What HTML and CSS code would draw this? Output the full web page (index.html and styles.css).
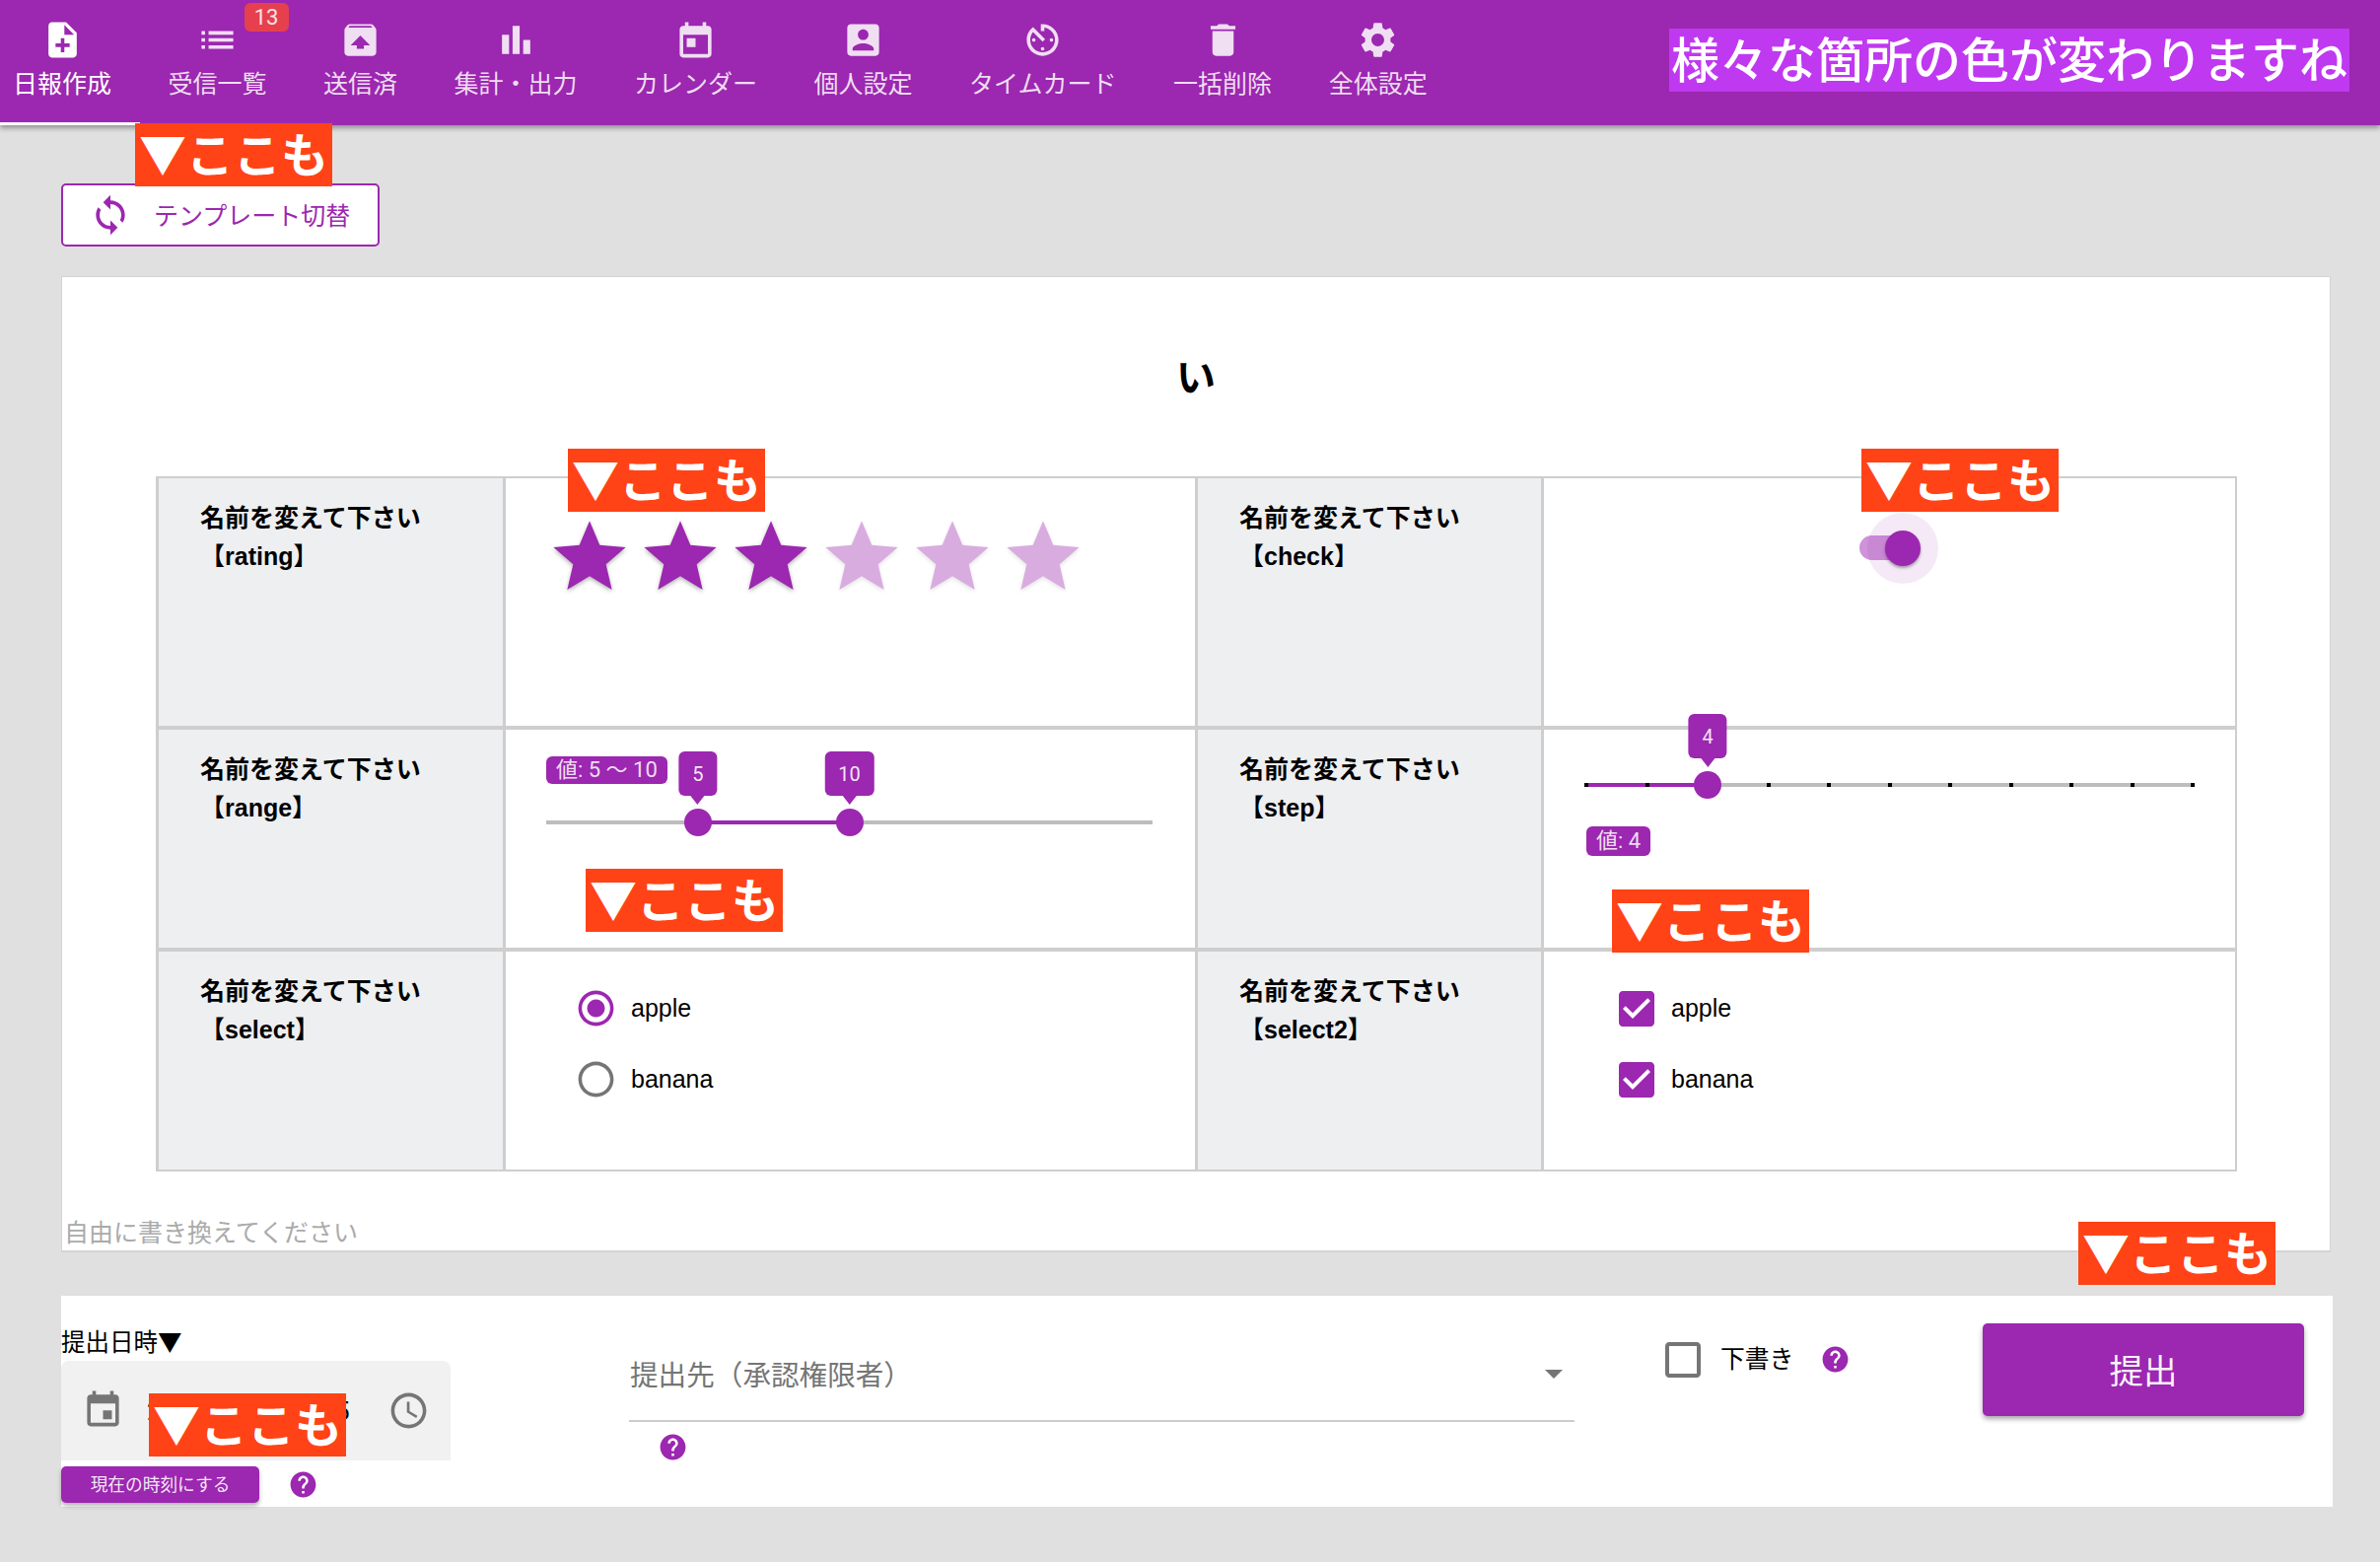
FILE: index.html
```html
<!DOCTYPE html>
<html>
<head>
<meta charset="utf-8">
<title>日報作成</title>
<link rel="stylesheet" href="styles.css">
</head>
<body>

<svg class="icon-defs" width="0" height="0">
  <symbol id="i-note" viewBox="0 0 24 24"><path d="M14 2H6c-1.1 0-1.99.9-1.99 2L4 20c0 1.1.89 2 1.99 2H18c1.1 0 2-.9 2-2V8l-6-6zm2 14h-3v3h-2v-3H8v-2h3v-3h2v3h3v2zm-3-7V3.5L18.5 9H13z"/></symbol>
  <symbol id="i-list" viewBox="0 0 24 24"><path d="M3 13h2v-2H3v2zm0 4h2v-2H3v2zm0-8h2V7H3v2zm4 4h14v-2H7v2zm0 4h14v-2H7v2zM7 7v2h14V7H7z"/></symbol>
  <symbol id="i-unarchive" viewBox="0 0 24 24"><path d="M20.55 5.22l-1.39-1.68C18.88 3.21 18.47 3 18 3H6c-.47 0-.88.21-1.15.55L3.46 5.22C3.17 5.57 3 6.01 3 6.5V19c0 1.1.89 2 2 2h14c1.1 0 2-.9 2-2V6.5c0-.49-.17-.93-.45-1.28zM12 9.5l5.5 5.5H14v2h-4v-2H6.5L12 9.5zM5.12 5l.82-1h12l.93 1H5.12z"/></symbol>
  <symbol id="i-chart" viewBox="0 0 24 24"><path d="M4 9h4v11H4zm6-5h4v16h-4zm6 8h4v8h-4z"/></symbol>
  <symbol id="i-today" viewBox="0 0 24 24"><path d="M19 4h-1V2h-2v2H8V2H6v2H5c-1.11 0-1.99.9-1.99 2L3 20c0 1.1.89 2 2 2h14c1.1 0 2-.9 2-2V6c0-1.1-.9-2-2-2zm0 16H5V9h14v11zM7 11h5v5H7z"/></symbol>
  <symbol id="i-event" viewBox="0 0 24 24"><path d="M17 13h-5v5h5v-5zM16 2v2H8V2H6v2H5c-1.11 0-1.99.9-1.99 2L3 20c0 1.1.89 2 2 2h14c1.1 0 2-.9 2-2V6c0-1.1-.9-2-2-2h-1V2h-2zm3 18H5V9h14v11z"/></symbol>
  <symbol id="i-account" viewBox="0 0 24 24"><path d="M3 5v14c0 1.1.89 2 2 2h14c1.1 0 2-.9 2-2V5c0-1.1-.9-2-2-2H5c-1.11 0-2 .9-2 2zm12 4c0 1.66-1.34 3-3 3s-3-1.34-3-3 1.34-3 3-3 3 1.34 3 3zm-9 8c0-2 4-3.1 6-3.1s6 1.1 6 3.1v1H6v-1z"/></symbol>
  <symbol id="i-timer" viewBox="0 0 24 24"><path d="M11 17c0 .55.45 1 1 1s1-.45 1-1-.45-1-1-1-1 .45-1 1zm0-14v4h2V5.08c3.39.49 6 3.39 6 6.92 0 3.87-3.13 7-7 7s-7-3.13-7-7c0-1.68.59-3.22 1.58-4.42L12 13l1.41-1.41-6.8-6.8v.02C4.42 6.45 3 9.05 3 12c0 4.97 4.02 9 9 9 4.97 0 9-4.03 9-9s-4.03-9-9-9h-1zm7 9c0-.55-.45-1-1-1s-1 .45-1 1 .45 1 1 1 1-.45 1-1zM6 12c0 .55.45 1 1 1s1-.45 1-1-.45-1-1-1-1 .45-1 1z"/></symbol>
  <symbol id="i-delete" viewBox="0 0 24 24"><path d="M6 19c0 1.1.9 2 2 2h8c1.1 0 2-.9 2-2V7H6v12zM19 4h-3.5l-1-1h-5l-1 1H5v2h14V4z"/></symbol>
  <symbol id="i-settings" viewBox="0 0 24 24"><path d="M19.14 12.94c.04-.3.06-.61.06-.94 0-.32-.02-.64-.07-.94l2.03-1.58c.18-.14.23-.41.12-.61l-1.92-3.32c-.12-.22-.37-.29-.59-.22l-2.39.96c-.5-.38-1.03-.7-1.62-.94l-.36-2.54c-.04-.24-.24-.41-.48-.41h-3.84c-.24 0-.43.17-.47.41l-.36 2.54c-.59.24-1.13.57-1.62.94l-2.39-.96c-.22-.08-.47 0-.59.22L2.74 8.87c-.12.21-.08.47.12.61l2.03 1.58c-.05.3-.09.63-.09.94s.02.64.07.94l-2.03 1.58c-.18.14-.23.41-.12.61l1.92 3.32c.12.22.37.29.59.22l2.39-.96c.5.38 1.03.7 1.62.94l.36 2.54c.05.24.24.41.48.41h3.84c.24 0 .44-.17.47-.41l.36-2.54c.59-.24 1.13-.56 1.62-.94l2.39.96c.22.08.47 0 .59-.22l1.92-3.32c.12-.22.07-.47-.12-.61l-2.01-1.58zM12 15.6c-1.98 0-3.6-1.62-3.6-3.6s1.62-3.6 3.6-3.6 3.6 1.62 3.6 3.6-1.62 3.6-3.6 3.6z"/></symbol>
  <symbol id="i-sync" viewBox="0 0 24 24"><path d="M12 4V1L8 5l4 4V6c3.31 0 6 2.69 6 6 0 1.01-.25 1.97-.7 2.8l1.46 1.46C19.54 15.03 20 13.57 20 12c0-4.42-3.58-8-8-8zm0 14c-3.31 0-6-2.69-6-6 0-1.01.25-1.97.7-2.8L5.24 7.74C4.46 8.97 4 10.43 4 12c0 4.42 3.58 8 8 8v3l4-4-4-4v3z"/></symbol>
  <symbol id="i-star" viewBox="0 0 24 24"><path d="M12 17.27L18.18 21l-1.64-7.03L22 9.24l-7.19-.61L12 2 9.19 8.63 2 9.24l5.46 4.73L5.82 21z"/></symbol>
  <symbol id="i-clock" viewBox="0 0 24 24"><path d="M11.99 2C6.47 2 2 6.48 2 12s4.47 10 9.99 10C17.52 22 22 17.52 22 12S17.52 2 11.99 2zM12 20c-4.42 0-8-3.58-8-8s3.58-8 8-8 8 3.58 8 8-3.58 8-8 8zm.5-13H11v6l5.25 3.15.75-1.23-4.5-2.67z"/></symbol>
  <symbol id="i-help" viewBox="0 0 24 24"><path d="M12 2C6.48 2 2 6.48 2 12s4.48 10 10 10 10-4.48 10-10S17.52 2 12 2zm1 17h-2v-2h2v2zm2.07-7.75l-.9.92C13.45 12.9 13 13.5 13 15h-2v-.5c0-1.1.45-2.1 1.17-2.83l1.24-1.26c.37-.36.59-.86.59-1.41 0-1.1-.9-2-2-2s-2 .9-2 2H8c0-2.21 1.79-4 4-4s4 1.79 4 4c0 .88-.36 1.68-.93 2.25z"/></symbol>
  <symbol id="i-checked" viewBox="0 0 24 24"><path d="M19 3H5c-1.11 0-2 .9-2 2v14c0 1.1.89 2 2 2h14c1.11 0 2-.9 2-2V5c0-1.1-.89-2-2-2zm-9 14l-5-5 1.41-1.41L10 14.17l7.59-7.59L19 8l-9 9z"/></symbol>
  <symbol id="i-unchecked" viewBox="0 0 24 24"><path d="M19 5v14H5V5h14m0-2H5c-1.1 0-2 .9-2 2v14c0 1.1.9 2 2 2h14c1.1 0 2-.9 2-2V5c0-1.1-.9-2-2-2z"/></symbol>
  <symbol id="i-radio-on" viewBox="0 0 24 24"><path d="M12 7c-2.76 0-5 2.24-5 5s2.24 5 5 5 5-2.24 5-5-2.24-5-5-5zm0-5C6.48 2 2 6.48 2 12s4.48 10 10 10 10-4.48 10-10S17.52 2 12 2zm0 18c-4.42 0-8-3.58-8-8s3.58-8 8-8 8 3.58 8 8-3.58 8-8 8z"/></symbol>
  <symbol id="i-radio-off" viewBox="0 0 24 24"><path d="M12 2C6.48 2 2 6.48 2 12s4.48 10 10 10 10-4.48 10-10S17.52 2 12 2zm0 18c-4.42 0-8-3.58-8-8s3.58-8 8-8 8 3.58 8 8-3.58 8-8 8z"/></symbol>
</svg>

<header class="appbar">
  <nav class="tabs">
    <a class="tab tab-active"><svg class="tab-icon"><use href="#i-note"/></svg><span>日報作成</span></a>
    <a class="tab"><svg class="tab-icon"><use href="#i-list"/></svg><span>受信一覧</span><b class="tab-badge">13</b></a>
    <a class="tab"><svg class="tab-icon"><use href="#i-unarchive"/></svg><span>送信済</span></a>
    <a class="tab"><svg class="tab-icon"><use href="#i-chart"/></svg><span>集計・出力</span></a>
    <a class="tab"><svg class="tab-icon"><use href="#i-today"/></svg><span>カレンダー</span></a>
    <a class="tab"><svg class="tab-icon"><use href="#i-account"/></svg><span>個人設定</span></a>
    <a class="tab"><svg class="tab-icon"><use href="#i-timer"/></svg><span>タイムカード</span></a>
    <a class="tab"><svg class="tab-icon"><use href="#i-delete"/></svg><span>一括削除</span></a>
    <a class="tab"><svg class="tab-icon"><use href="#i-settings"/></svg><span>全体設定</span></a>
  </nav>
  <div class="appbar-note">様々な箇所の色が変わりますね</div>
</header>
<div class="tab-indicator"></div>

<main class="page">
  <button class="template-btn" type="button">
    <svg class="template-icon"><use href="#i-sync"/></svg>
    <span>テンプレート切替</span>
  </button>

  <section class="sheet">
    <h1 class="sheet-title">い</h1>
    <div class="form-grid">
      <div class="cell-label">名前を変えて下さい<br>【rating】</div>
      <div class="cell-value">
        <div class="stars">
          <svg class="star"><use href="#i-star"/></svg>
          <svg class="star"><use href="#i-star"/></svg>
          <svg class="star"><use href="#i-star"/></svg>
          <svg class="star star-off"><use href="#i-star"/></svg>
          <svg class="star star-off"><use href="#i-star"/></svg>
          <svg class="star star-off"><use href="#i-star"/></svg>
        </div>
      </div>
      <div class="cell-label">名前を変えて下さい<br>【check】</div>
      <div class="cell-value cell-end">
        <div class="switch-wrap">
          <div class="switch">
            <div class="switch-track"></div>
            <div class="switch-halo"></div>
            <div class="switch-knob"></div>
          </div>
        </div>
      </div>

      <div class="cell-label">名前を変えて下さい<br>【range】</div>
      <div class="cell-value">
        <div class="range-box">
          <span class="value-chip">値: 5 ～ 10</span>
          <div class="slider">
            <div class="slider-fill" style="left:25%;width:25%"></div>
            <div class="slider-thumb" style="left:25%"><span class="slider-bubble">5</span></div>
            <div class="slider-thumb" style="left:50%"><span class="slider-bubble">10</span></div>
          </div>
        </div>
      </div>
      <div class="cell-label">名前を変えて下さい<br>【step】</div>
      <div class="cell-value cell-end">
        <div class="step-box">
          <div class="slider">
            <div class="slider-fill" style="left:0;width:20%"></div>
            <i class="tick" style="left:0"></i><i class="tick" style="left:10%"></i>
            <i class="tick" style="left:20%"></i><i class="tick" style="left:30%"></i>
            <i class="tick" style="left:40%"></i><i class="tick" style="left:50%"></i>
            <i class="tick" style="left:60%"></i><i class="tick" style="left:70%"></i>
            <i class="tick" style="left:80%"></i><i class="tick" style="left:90%"></i>
            <i class="tick" style="left:100%"></i>
            <div class="slider-thumb" style="left:20%"><span class="slider-bubble">4</span></div>
          </div>
          <span class="value-chip step-chip">値: 4</span>
        </div>
      </div>

      <div class="cell-label">名前を変えて下さい<br>【select】</div>
      <div class="cell-value">
        <div class="choices">
          <div class="choice"><svg class="choice-icon"><use href="#i-radio-on"/></svg>apple</div>
          <div class="choice"><svg class="choice-icon choice-off"><use href="#i-radio-off"/></svg>banana</div>
        </div>
      </div>
      <div class="cell-label">名前を変えて下さい<br>【select2】</div>
      <div class="cell-value cell-end">
        <div class="choices">
          <div class="choice"><svg class="check-icon"><use href="#i-checked"/></svg>apple</div>
          <div class="choice"><svg class="check-icon"><use href="#i-checked"/></svg>banana</div>
        </div>
      </div>
    </div>
    <p class="free-text">自由に書き換えてください</p>
  </section>

  <section class="submit-bar">
    <div class="date-col">
      <div class="date-label">提出日時▼</div>
      <div class="date-field">
        <svg class="date-icon date-icon-cal"><use href="#i-event"/></svg>
        <span class="date-text">2020/10/14 12:35</span>
        <svg class="date-icon"><use href="#i-clock"/></svg>
      </div>
      <div class="now-row">
        <button class="now-btn" type="button">現在の時刻にする</button>
        <svg class="help-icon"><use href="#i-help"/></svg>
      </div>
    </div>
    <div class="target-col">
      <div class="target-select">
        <span>提出先（承認権限者）</span>
        <i class="select-arrow"></i>
      </div>
      <svg class="help-icon target-help"><use href="#i-help"/></svg>
    </div>
    <div class="draft-col">
      <svg class="check-icon choice-off"><use href="#i-unchecked"/></svg>
      <span class="draft-text">下書き</span>
      <svg class="help-icon"><use href="#i-help"/></svg>
    </div>
    <button class="submit-btn" type="button">提出</button>
  </section>
</main>

<!-- overlay labels pasted over the screenshot -->
<div class="koko" style="left:137px;top:125px">▼ここも</div>
<div class="koko" style="left:576px;top:455px">▼ここも</div>
<div class="koko" style="left:594px;top:881px">▼ここも</div>
<div class="koko" style="left:1888px;top:455px">▼ここも</div>
<div class="koko" style="left:1635px;top:902px">▼ここも</div>
<div class="koko" style="left:151px;top:1413px">▼ここも</div>
<div class="koko" style="left:2108px;top:1239px">▼ここも</div>

</body>
</html>
```

FILE: styles.css
```css
* {
  box-sizing: border-box;
}

html, body {
  margin: 0;
  padding: 0;
}

body {
  position: relative;
  height: 1584px;
  overflow: hidden;
  background-color: #e0e0e0;
  font-family: "Liberation Sans", "Noto Sans CJK JP", sans-serif;
  font-size: 25px;
  color: #000;
}

.icon-defs {
  position: absolute;
}

/* top bar */
.appbar {
  display: flex;
  justify-content: space-between;
  height: 127px;
  padding-left: 13px;
  padding-right: 31px;
  background-color: #9c27b0;
  box-shadow: 0 3px 5px rgba(0, 0, 0, 0.35);
}

.tabs {
  display: flex;
  gap: 57.5px;
}

.tab {
  position: relative;
  display: flex;
  flex-direction: column;
  align-items: center;
  font-family: "Noto Sans CJK JP", sans-serif;
  font-size: 25px;
  line-height: 36px;
  color: rgba(255, 255, 255, 0.85);
  fill: rgba(255, 255, 255, 0.85);
  white-space: nowrap;
}

.tab-active {
  color: #fff;
  fill: #fff;
}

.tab-icon {
  width: 43px;
  height: 43px;
  margin-top: 19px;
  margin-bottom: 3px;
}

.tab-badge {
  position: absolute;
  left: 77px;
  top: 3px;
  width: 45px;
  height: 29px;
  background-color: #e6404f;
  border-radius: 6px;
  font-family: Roboto, sans-serif;
  font-size: 22px;
  font-weight: 400;
  line-height: 29px;
  text-align: center;
  color: #fbe3e5;
}

.appbar-note {
  align-self: flex-start;
  margin-top: 29px;
  height: 64px;
  padding: 0 2px;
  background-color: #bf39f0;
  font-family: "Noto Sans CJK JP", sans-serif;
  font-size: 49px;
  font-weight: 500;
  line-height: 58px;
  color: #fff;
  white-space: nowrap;
}

.tab-indicator {
  position: absolute;
  left: 0;
  top: 124px;
  width: 142px;
  height: 3px;
  background-color: #fff;
}

/* page */
.page {
  padding: 59px 48px 0 62px;
}

.template-btn {
  display: flex;
  align-items: center;
  width: 323px;
  height: 64px;
  padding: 0 0 0 26px;
  background-color: #fff;
  border: 2px solid #9c27b0;
  border-radius: 5px;
  font-family: "Noto Sans CJK JP", sans-serif;
  font-size: 25px;
  color: #9c27b0;
  fill: #9c27b0;
}

.template-btn span {
  padding-bottom: 3px;
}

.template-icon {
  width: 44px;
  height: 44px;
  margin-right: 22px;
}

.sheet {
  height: 990px;
  margin-top: 30px;
  margin-right: 2px;
  padding-top: 1px;
  background-color: #fff;
  border: 1px solid #d4d4d4;
  border-bottom-width: 2px;
}

.sheet-title {
  margin: 0;
  height: 201px;
  padding-top: 70px;
  text-align: center;
  font-family: "Noto Sans CJK JP", sans-serif;
  font-size: 40px;
  font-weight: 700;
  line-height: 56px;
}

.form-grid {
  display: grid;
  grid-template-columns: 352px 702px 351px 703px;
  grid-template-rows: 255px 225px 223px;
  width: 2111px;
  margin-left: 95px;
  border-top: 2px solid #cecece;
  border-left: 3px solid #cecece;
}

.cell-label, .cell-value {
  border-right: 3px solid #cecece;
  border-bottom: 4px solid #cecece;
}

.form-grid > :nth-last-child(-n+4) {
  border-bottom-width: 2px;
}

.cell-label {
  padding: 21px 0 0 42px;
  background-color: #eeeff1;
  font-weight: 700;
  line-height: 39px;
}

.cell-value {
  background-color: #fff;
}

.cell-end {
  border-right-width: 2px;
}

/* rating */
.stars {
  display: flex;
  gap: 4px;
  padding: 36px 0 0 41px;
}

.star {
  width: 88px;
  height: 88px;
  fill: #9c27b0;
  filter: drop-shadow(0 2px 2px rgba(0, 0, 0, 0.3));
}

.star-off {
  opacity: 0.38;
}

/* switch */
.switch-wrap {
  padding: 58px 0 0 320px;
}

.switch {
  position: relative;
  width: 60px;
  height: 25px;
}

.switch-track {
  width: 60px;
  height: 25px;
  background-color: #ce93d8;
  border-radius: 13px;
}

.switch-halo {
  position: absolute;
  left: 8px;
  top: -23px;
  width: 72px;
  height: 72px;
  background-color: #9c27b0;
  opacity: 0.1;
  border-radius: 50%;
}

.switch-knob {
  position: absolute;
  left: 26px;
  top: -5px;
  width: 36px;
  height: 36px;
  background-color: #9c27b0;
  border-radius: 50%;
  box-shadow: 0 2px 3px rgba(0, 0, 0, 0.35);
}

/* sliders */
.range-box {
  padding: 27px 0 0 41px;
}

.value-chip {
  display: inline-block;
  height: 28px;
  padding: 0 10px;
  background-color: #9c27b0;
  border-radius: 6px;
  font-family: "Roboto", "Noto Sans CJK JP", sans-serif;
  font-size: 22px;
  line-height: 28px;
  color: rgba(255, 255, 255, 0.85);
  vertical-align: top;
}

.range-box .slider {
  width: 615px;
  margin-top: 36px;
}

.step-box {
  padding: 54px 0 0 43px;
}

.step-box .slider {
  width: 615px;
}

.step-chip {
  height: 30px;
  margin-top: 40px;
  line-height: 30px;
}

.slider {
  position: relative;
  height: 4px;
  background-color: #bdbdbd;
}

.slider-fill {
  position: absolute;
  top: 0;
  height: 4px;
  background-color: #9c27b0;
}

.tick {
  position: absolute;
  top: 0;
  width: 4px;
  height: 4px;
  margin-left: -2px;
  background-color: #000;
}

.slider-thumb {
  position: absolute;
  top: -12px;
  width: 28px;
  height: 28px;
  margin-left: -14px;
  background-color: #9c27b0;
  border-radius: 50%;
}

.slider-bubble {
  position: absolute;
  bottom: 41px;
  left: 50%;
  transform: translateX(-50%);
  height: 45px;
  padding: 0 14px;
  background-color: #9c27b0;
  border-radius: 6px;
  font-family: Roboto, sans-serif;
  font-size: 20px;
  line-height: 46px;
  text-align: center;
  color: rgba(255, 255, 255, 0.9);
}

.slider-bubble::after {
  content: "";
  position: absolute;
  left: 50%;
  bottom: -9px;
  margin-left: -7px;
  border-left: 7px solid transparent;
  border-right: 7px solid transparent;
  border-top: 9px solid #9c27b0;
}

/* radios and checkboxes */
.choices {
  display: flex;
  flex-direction: column;
  gap: 29px;
  padding: 36px 0 0 70px;
}

.choice {
  display: flex;
  align-items: center;
  height: 43px;
  gap: 14px;
}

.choice-icon {
  width: 43px;
  height: 43px;
  fill: #9c27b0;
}

.check-icon {
  width: 48px;
  height: 48px;
  margin: -2.5px -3px -2.5px 0;
  fill: #9c27b0;
}

.check-icon.choice-off, .choice-off {
  fill: #757575;
}

.free-text {
  margin: 42px 0 0 2px;
  line-height: 36px;
  font-family: "Noto Sans CJK JP", sans-serif;
  color: #aaa;
}

/* bottom bar */
.submit-bar {
  display: flex;
  align-items: flex-start;
  width: 2304px;
  height: 214px;
  margin-top: 44px;
  background-color: #fff;
}

.date-col {
  width: 395px;
  padding-top: 29px;
}

.date-label {
  height: 37px;
  padding-bottom: 2px;
  font-family: "Noto Sans CJK JP", sans-serif;
  font-size: 24.5px;
  line-height: 34px;
}

.date-field {
  display: flex;
  align-items: center;
  height: 101px;
  padding: 0 21px;
  background-color: #f1f1f1;
  border-radius: 8px 8px 0 0;
  fill: #757575;
}

.date-icon {
  flex: none;
  width: 43px;
  height: 43px;
}

.date-icon-cal {
  margin-bottom: 4px;
}

.date-text {
  flex: 1;
  padding-left: 23px;
  font-family: Roboto, sans-serif;
  font-size: 25.5px;
  white-space: nowrap;
}

.now-row {
  display: flex;
  align-items: center;
  gap: 29px;
  margin-top: 6px;
}

.now-btn {
  width: 201px;
  height: 37px;
  padding: 0 0 3px;
  background-color: #9c27b0;
  border: 0;
  border-radius: 5px;
  font-family: "Noto Sans CJK JP", sans-serif;
  font-size: 17.7px;
  color: rgba(255, 255, 255, 0.9);
  box-shadow: 0 3px 4px rgba(0, 0, 0, 0.3);
}

.help-icon {
  flex: none;
  width: 31px;
  height: 31px;
  fill: #9c27b0;
}

.target-col {
  width: 959px;
  margin-left: 181px;
  padding-top: 54px;
}

.target-select {
  display: flex;
  justify-content: space-between;
  align-items: center;
  height: 74px;
  padding: 0 12px 21px 1px;
  border-bottom: 2px solid #ccc;
  font-family: "Noto Sans CJK JP", sans-serif;
  font-size: 28.6px;
  color: #757575;
}

.target-select span {
  padding-bottom: 3px;
}

.select-arrow {
  border-left: 9px solid transparent;
  border-right: 9px solid transparent;
  border-top: 9px solid #757575;
}

.target-help {
  display: block;
  margin: 10px 0 0 29px;
}

.draft-col {
  display: flex;
  align-items: center;
  width: 328px;
  margin-left: 86px;
  padding-top: 43px;
}

.draft-text {
  margin-left: 17px;
  margin-right: 27px;
  padding-bottom: 5px;
  font-family: "Noto Sans CJK JP", sans-serif;
  font-size: 24.8px;
}

.submit-btn {
  width: 326px;
  height: 94px;
  margin-top: 28px;
  padding: 0 0 3px;
  background-color: #9c27b0;
  border: 0;
  border-radius: 5px;
  font-family: "Noto Sans CJK JP", sans-serif;
  font-size: 34.5px;
  color: rgba(255, 255, 255, 0.95);
  box-shadow: 0 3px 5px rgba(0, 0, 0, 0.35);
}

/* overlay labels */
.koko {
  position: absolute;
  width: 200px;
  height: 64px;
  padding-left: 4px;
  background-color: #ff4316;
  font-family: "Noto Sans CJK JP", sans-serif;
  font-size: 48px;
  font-weight: 700;
  line-height: 58px;
  color: #fff;
  white-space: nowrap;
}
```
